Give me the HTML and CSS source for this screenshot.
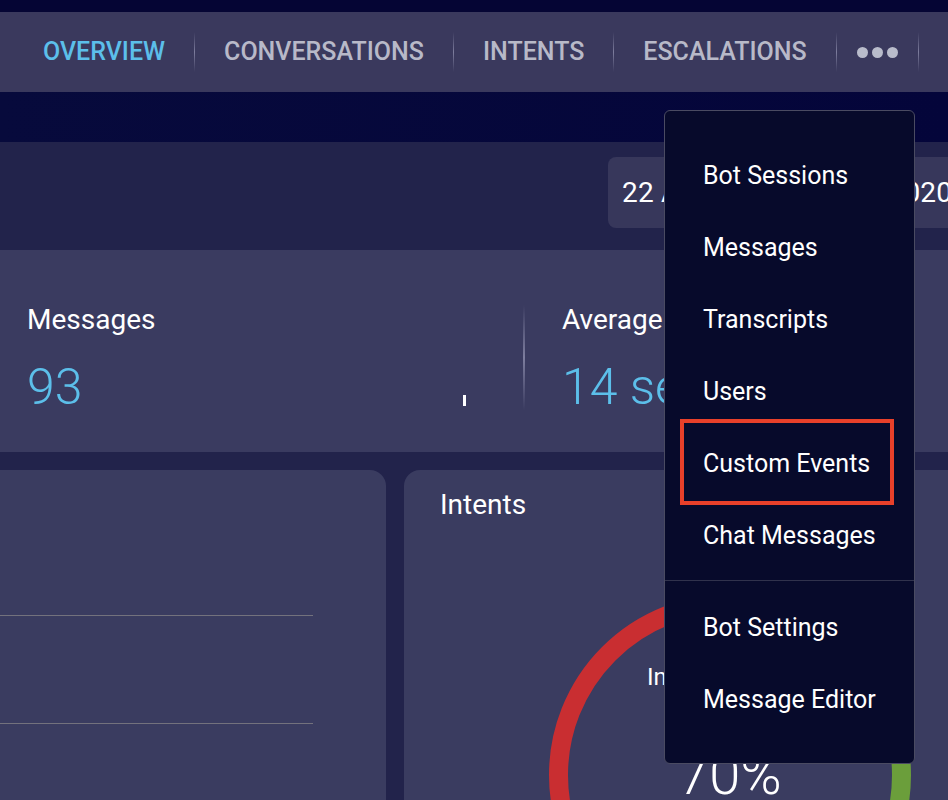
FILE: index.html
```html
<!DOCTYPE html>
<html lang="en">
<head>
<meta charset="utf-8">
<title>Bot Analytics – Overview</title>
<link rel="stylesheet" href="styles.css">
</head>
<body>
<div class="page">
  <div class="top-strip"></div>
  <nav class="tabs">
    <a class="tab active">Overview</a>
    <span class="tab-sep"></span>
    <a class="tab">Conversations</a>
    <span class="tab-sep"></span>
    <a class="tab">Intents</a>
    <span class="tab-sep"></span>
    <a class="tab">Escalations</a>
    <span class="tab-sep"></span>
    <button class="tab more" aria-label="More"><span class="dot"></span><span class="dot"></span><span class="dot"></span></button>
    <span class="tab-sep"></span>
  </nav>
  <div class="nav-gap"></div>

  <main class="content">
    <div class="toolbar">
      <div class="date-range">22 Apr 2020 - 28 Apr 2020</div>
    </div>

    <section class="stats">
      <div class="stat stat-first">
        <div class="stat-label">Messages</div>
        <div class="stat-row">
          <div class="stat-value">93</div>
          <span class="tick"></span>
        </div>
      </div>
      <span class="stat-sep"></span>
      <div class="stat stat-second">
        <div class="stat-label">Average Session Length</div>
        <div class="stat-row">
          <div class="stat-value">14 sec</div>
        </div>
      </div>
    </section>

    <section class="cards">
      <div class="card card-chart">
        <div class="grid-line"></div>
        <div class="grid-line"></div>
      </div>
      <div class="card card-intents">
        <h3 class="card-title">Intents</h3>
        <div class="donut">
          <svg width="400" height="400" viewBox="0 0 400 400">
            <g transform="rotate(-90 200 200)">
              <circle cx="200" cy="200" r="171.5" fill="none" stroke="#6b9e3b" stroke-width="19" stroke-dasharray="754.3 1077.6"/>
              <circle cx="200" cy="200" r="171.5" fill="none" stroke="#c92e31" stroke-width="19" stroke-dasharray="323.3 1077.6" stroke-dashoffset="-754.3"/>
            </g>
          </svg>
          <div class="donut-label">
            <div class="donut-caption">Intent Accuracy</div>
            <div class="donut-value">70%</div>
          </div>
        </div>
      </div>
    </section>
  </main>

  <div class="menu">
    <a class="menu-item">Bot Sessions</a>
    <a class="menu-item">Messages</a>
    <a class="menu-item">Transcripts</a>
    <a class="menu-item">Users</a>
    <a class="menu-item highlighted">Custom Events</a>
    <a class="menu-item">Chat Messages</a>
    <div class="menu-divider"></div>
    <a class="menu-item">Bot Settings</a>
    <a class="menu-item">Message Editor</a>
  </div>
</div>
</body>
</html>
```

FILE: styles.css
```css
html, body {
  margin: 0;
  padding: 0;
  width: 948px;
  height: 800px;
  overflow: hidden;
  background: #050637;
  font-family: Roboto, "Noto Sans", Arial, sans-serif;
}

.page {
  position: relative;
  width: 948px;
  height: 800px;
  overflow: hidden;
}

.top-strip {
  height: 12px;
  background: #050534;
}

/* ---------- tabs ---------- */
.tabs {
  height: 80px;
  background: #3a395d;
  display: flex;
  align-items: center;
  padding-left: 14px;
}

.tab {
  padding: 0 29px;
  font-size: 25px;
  font-weight: 500;
  color: #b8b9c8;
  text-transform: uppercase;
  white-space: nowrap;
  line-height: 30px;
}

.tab.active {
  color: #5cbfea;
}

.tab-sep {
  width: 1px;
  height: 40px;
  background: linear-gradient(to bottom, rgba(170, 170, 200, 0), rgba(170, 170, 200, 0.6) 50%, rgba(170, 170, 200, 0));
}

.more {
  border: 0;
  background: none;
  padding: 0 20px;
  display: flex;
  gap: 4px;
  align-items: center;
  height: 30px;
}

.dot {
  width: 11px;
  height: 11px;
  border-radius: 50%;
  background: #b9bccb;
}

.nav-gap {
  height: 50px;
  background: linear-gradient(to right, #070a3c, #04053a);
}

/* ---------- content ---------- */
.content {
  background: #22234b;
  height: 658px;
}

.toolbar {
  height: 108px;
  padding: 15px 0 0 608px;
  box-sizing: border-box;
  display: flex;
  align-items: flex-start;
  overflow: hidden;
}

.date-range {
  height: 71px;
  background: #37375b;
  border-radius: 8px;
  padding: 0 24px 0 14px;
  display: flex;
  align-items: center;
  font-size: 28px;
  letter-spacing: 0.2px;
  color: #ffffff;
  white-space: nowrap;
  flex-shrink: 0;
}

/* ---------- stats ---------- */
.stats {
  height: 202px;
  background: #3a3b60;
  display: flex;
  align-items: flex-start;
  box-sizing: border-box;
  padding-top: 53px;
}

.stat {
  box-sizing: border-box;
}

.stat-first {
  width: 523px;
  padding: 0 57px 0 27px;
}

.stat-second {
  padding-left: 37px;
  white-space: nowrap;
}

.stat-label {
  font-size: 28px;
  line-height: 33px;
  color: #ffffff;
}

.stat-row {
  margin-top: 21px;
  display: flex;
  justify-content: space-between;
  align-items: flex-end;
}

.stat-value {
  font-size: 50px;
  font-weight: 300;
  line-height: 60px;
  color: #5cbfea;
}

.tick {
  width: 3px;
  height: 11px;
  background: #ffffff;
  margin-bottom: 11px;
}

.stat-sep {
  width: 2px;
  height: 105px;
  margin-top: 2px;
  background: linear-gradient(to bottom, rgba(170, 170, 200, 0), rgba(170, 170, 200, 0.6) 50%, rgba(170, 170, 200, 0));
}

/* ---------- cards ---------- */
.cards {
  display: flex;
  gap: 18px;
  padding-top: 18px;
  margin-left: -24px;
}

.card {
  background: #3a3c60;
  border-radius: 16px;
  height: 420px;
  box-sizing: border-box;
  flex-shrink: 0;
}

.card-chart {
  width: 410px;
  padding: 145px 73px 0 0;
}

.grid-line {
  height: 1px;
  background: #73727d;
}

.grid-line + .grid-line {
  margin-top: 107px;
}

.card-intents {
  width: 660px;
  padding: 21px 0 0 36px;
}

.card-title {
  margin: 0;
  font-size: 28px;
  font-weight: 400;
  line-height: 28px;
  color: #ffffff;
}

.donut {
  position: relative;
  width: 400px;
  height: 400px;
  margin: 56px 0 0 90px;
}

.donut svg {
  display: block;
}

.donut-label {
  position: absolute;
  left: 0;
  right: 0;
  top: 88px;
  text-align: center;
  color: #ffffff;
}

.donut-caption {
  font-size: 24px;
  line-height: 28px;
}

.donut-value {
  margin-top: 52px;
  font-size: 56px;
  font-weight: 300;
  line-height: 64px;
}

/* ---------- dropdown menu ---------- */
.menu {
  position: absolute;
  left: 664px;
  top: 110px;
  width: 251px;
  box-sizing: border-box;
  background: #070a2b;
  border: 1px solid #4a4b62;
  border-radius: 6px;
  padding: 28px 0;
  display: flex;
  flex-direction: column;
}

.menu-item {
  position: relative;
  height: 72px;
  display: flex;
  align-items: center;
  padding-left: 38px;
  font-size: 25px;
  color: #ffffff;
  white-space: nowrap;
}

.menu-item.highlighted::after {
  content: "";
  position: absolute;
  left: 15px;
  right: 20px;
  top: -8px;
  bottom: -6px;
  border: 4px solid #e8402a;
}

.menu-divider {
  height: 1px;
  margin: 9px 0 10px;
  background: #30324c;
}
```
